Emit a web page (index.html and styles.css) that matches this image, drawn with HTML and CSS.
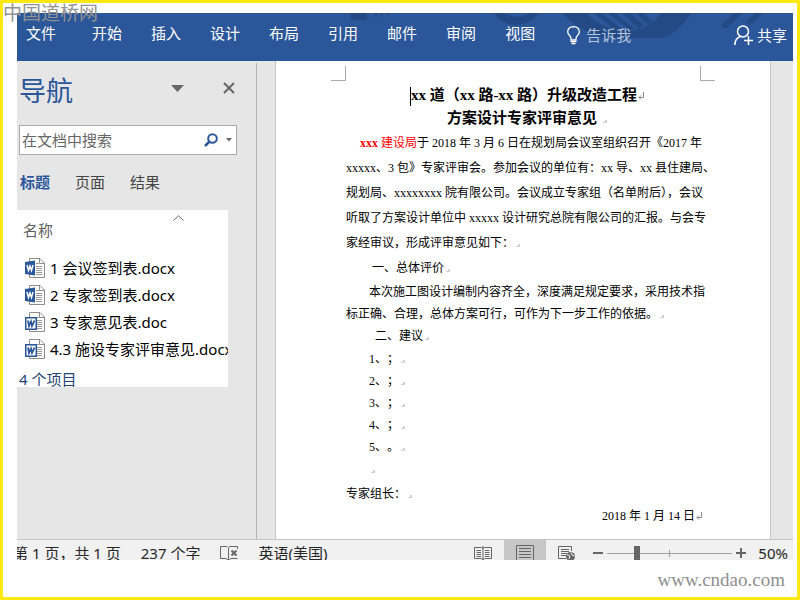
FILE: index.html
```html
<!DOCTYPE html>
<html lang="zh-CN">
<head>
  <meta charset="UTF-8">
  <meta name="viewport" content="width=device-width, initial-scale=1.0">
  <link rel="stylesheet" href="styles.css">
  <title>专家评审意见</title>
</head>
<body>
  <!-- shared icons -->
  <svg class="defs" width="0" height="0" aria-hidden="true">
    <symbol id="sheet" viewBox="0 0 20 20">
      <path d="M4.500 .5H15L19.500 5V19.500H4.500Z" fill="#fff" stroke="#8c8c8c"/>
      <path d="M14.500 .5V5.500H19.500" fill="none" stroke="#8c8c8c"/>
      <path d="M11 5.500h3M11 8.500h6M11 10.500h6M11 12.500h6M11 14.500h6M11 16.500h6" stroke="#9a9a9a"/>
    </symbol>
    <symbol id="docx" viewBox="0 0 20 20">
      <use href="#sheet"/>
      <path d="M0 4L10 2.500V17.500L0 16Z" fill="#2b579a"/>
      <path d="M2 7L3.500 12.500L5 8L6.500 12.500L8 7" fill="none" stroke="#fff" stroke-width="1.500"/>
    </symbol>
    <symbol id="doc" viewBox="0 0 20 20">
      <use href="#sheet"/>
      <path d="M.75 5.750H11.250V17.250H.75Z" fill="#fff" stroke="#2b579a" stroke-width="1.500"/>
      <path d="M3 8.500L4 14L6 9.500L7 14L9.500 8.500" fill="none" stroke="#2b579a" stroke-width="1.800"/>
    </symbol>
    <symbol id="enter" viewBox="0 0 6 8">
      <path d="M5.500 0V5.500H1M3 3.500L1 5.500L3 7.500" fill="none" stroke="#8a8a8a"/>
    </symbol>
  </svg>

  <div class="frame">
    <div class="site-name">中国道桥网</div>

    <div class="word">
      <header class="ribbon">
        <svg class="pattern" width="450" height="26" viewBox="0 0 450 26" aria-hidden="true">
          <g fill="#234a85">
            <path d="M7 0H24V5Q23 7 20 7H11Q7 7 7 3ZM32 0H34V5H32ZM38 0H40V3H38ZM44 0H46V2H44Z"/>
            <path d="M151 0Q160 12 173 12Q186 12 196 0H187Q174 8 161 0Z"/>
            <path d="M219 0Q225 7 235 13L248 21Q256 25 268 25H318Q329 23 338 13L349 0H318Q311 10 300 15Q284 20 266 15Q250 9 244 0Z"/>
            <path d="M251 0H258L280 17H272ZM265 0H272L292 16H285ZM279 0H286L301 12L296 16ZM293 0H300L310 8L305 12Z"/>
            <path d="M391 0H400L383 16L378 12ZM413 0H420L407 12L402 9Z"/>
          </g>
        </svg>
        <nav class="tabs">
          <a class="file" href="#">文件</a>
          <a href="#">开始</a>
          <a href="#">插入</a>
          <a href="#">设计</a>
          <a href="#">布局</a>
          <a href="#">引用</a>
          <a href="#">邮件</a>
          <a href="#">审阅</a>
          <a href="#">视图</a>
        </nav>
        <button class="tell">
          <svg width="13" height="19" viewBox="0 0 13 19" fill="none" stroke="#fff">
            <path d="M4 14V12.500Q4 11 2.500 9.500Q.7 8 .7 5.700Q1 .8 6.500 .7Q12 .8 12.300 5.700Q12.300 8 10.500 9.500Q9 11 9 12.500V14Z" stroke-width="1.300"/>
            <path d="M3.500 15.500H9.500M4.500 17.500H8.500" stroke-width="1.500"/>
          </svg>
          <span>告诉我</span>
        </button>
        <button class="share">
          <svg width="19" height="20" viewBox="0 0 19 20" fill="none" stroke="#fff" stroke-width="1.500">
            <circle cx="9" cy="6.500" r="5.500"/>
            <path d="M.8 20Q1.200 13 6.500 11.500M14.500 11V20M10 15.500H19"/>
          </svg>
          <span>共享</span>
        </button>
      </header>

      <main class="work">
        <aside class="pane">
          <div class="pane-head">
            <h2>导航</h2>
            <button aria-label="任务窗格选项">
              <svg width="13" height="7" viewBox="0 0 13 7"><path d="M0 0H13L6.500 7Z" fill="#666"/></svg>
            </button>
            <button aria-label="关闭">
              <svg width="12" height="12" viewBox="0 0 12 12"><path d="M1 1L11 11M11 1L1 11" stroke="#666" stroke-width="2"/></svg>
            </button>
          </div>

          <div class="search">
            <input type="text" aria-label="在文档中搜索" placeholder="在文档中搜索">
            <button aria-label="搜索">
              <svg width="14" height="14" viewBox="0 0 14 14" fill="none" stroke="#2b579a">
                <circle cx="8.500" cy="5.500" r="4.300" stroke-width="2"/>
                <path d="M5.500 8.500L1 13" stroke-width="2.500"/>
              </svg>
            </button>
            <button aria-label="搜索选项">
              <svg width="6" height="4" viewBox="0 0 6 4"><path d="M0 0H6L3 3.500Z" fill="#666"/></svg>
            </button>
          </div>

          <div class="views">
            <button class="active">标题</button>
            <button>页面</button>
            <button>结果</button>
          </div>

          <div class="files">
            <div class="files-head">
              <span>名称</span>
              <svg width="11" height="6" viewBox="0 0 11 6"><path d="M.5 5.500L5.500 .8L10.500 5.500" fill="none" stroke="#666"/></svg>
            </div>
            <ul>
              <li><a href="#"><svg width="20" height="20"><use href="#docx"/></svg>1 会议签到表.docx</a></li>
              <li><a href="#"><svg width="20" height="20"><use href="#docx"/></svg>2 专家签到表.docx</a></li>
              <li><a href="#"><svg width="20" height="20"><use href="#doc"/></svg>3 专家意见表.doc</a></li>
              <li><a href="#"><svg width="20" height="20"><use href="#doc"/></svg>4.3 施设专家评审意见.docx</a></li>
            </ul>
            <div class="count">4 个项目</div>
          </div>
        </aside>

        <article class="paper">
          <div class="corners"><i class="left"></i><i class="right"></i></div>
          <h1><span class="caret"></span>xx 道（xx 路-xx 路）升级改造工程<svg class="enter" width="6" height="8"><use href="#enter"/></svg><br>方案设计专家评审意见 <i class="end"></i></h1>
          <p class="intro"><span class="red"><b>xxx</b> 建设局</span>于 2018 年 3 月 6 日在规划局会议室组织召开《2017 年<br>xxxxx、3 包》专家评审会。参加会议的单位有：xx 导、xx 县住建局、<br>规划局、xxxxxxxx 院有限公司。会议成立专家组（名单附后），会议<br>听取了方案设计单位中 xxxxx 设计研究总院有限公司的汇报。与会专<br>家经审议，形成评审意见如下：<i class="end"></i></p>
          <h3 class="first">一、总体评价<i class="end"></i></h3>
          <p>本次施工图设计编制内容齐全，深度满足规定要求，采用技术指<br>标正确、合理，总体方案可行，可作为下一步工作的依据。<i class="end"></i></p>
          <h3>二、建议<i class="end"></i></h3>
          <ol>
            <li>1、；<i class="end"></i></li>
            <li>2、；<i class="end"></i></li>
            <li>3、；<i class="end"></i></li>
            <li>4、；<i class="end"></i></li>
            <li>5、。<i class="end"></i></li>
            <li><i class="end"></i></li>
          </ol>
          <div class="leader">专家组长：<i class="end"></i></div>
          <div class="date">2018 年 1 月 14 日<svg class="enter" width="6" height="8"><use href="#enter"/></svg></div>
        </article>
      </main>

      <footer class="status">
        <div class="status-row">
          <span class="pages">第 1 页，共 1 页</span>
          <span>237 个字</span>
          <svg width="18" height="16" viewBox="0 0 18 16" fill="none" stroke="#666">
            <path d="M7.500 1.500H.5V13.500H6L8.500 15.500L11 13.500H17.500M8.500 15V2.500L10 1.500H17.500V4"/>
            <path d="M11.500 5.500L16.500 10.500M16.500 5.500L11.500 10.500" stroke-width="2"/>
          </svg>
          <span>英语(美国)</span>
          <div class="modes">
            <button aria-label="阅读视图">
              <svg width="18" height="15" viewBox="0 0 18 15" fill="none" stroke="#666">
                <path d="M.5 1.500H7.500L9 2.500L10.500 1.500H17.500V12.500H10.500L9 14L7.500 12.500H.5ZM9 0V15"/>
                <path d="M2.500 4.500H7M2.500 6.500H7M2.500 8.500H7M2.500 10.500H7M11 4.500H15.500M11 6.500H15.500M11 8.500H15.500M11 10.500H15.500"/>
              </svg>
            </button>
            <button class="on" aria-label="页面视图">
              <svg width="18" height="16" viewBox="0 0 18 16" fill="none" stroke="#666">
                <path d="M.5 .5H17.500V15.500H.5ZM3 3.500H15M3 6.500H15M3 9.500H15M3 12.500H15"/>
              </svg>
            </button>
            <button aria-label="Web 版式视图">
              <svg width="18" height="15" viewBox="0 0 18 15" fill="none" stroke="#666">
                <path d="M8 12.500H.5V.5H13.500V5M3 3.500H11M3 5.500H11M3 7.500H9M3 9.500H8"/>
                <circle cx="12.500" cy="10.500" r="4.500" fill="#666" stroke="none"/>
                <path d="M9 8.500L12 10L11 13M13 6.500L14 9L16.500 10" stroke="#f1f1f1"/>
              </svg>
            </button>
          </div>
          <div class="zoom">
            <button aria-label="缩小"><svg width="10" height="10" viewBox="0 0 10 10"><path d="M0 5H10" stroke="#666" stroke-width="2"/></svg></button>
            <input type="range" min="10" max="190" value="50" aria-label="缩放">
            <button aria-label="放大"><svg width="10" height="10" viewBox="0 0 10 10"><path d="M0 5H10M5 0V10" stroke="#666" stroke-width="2"/></svg></button>
          </div>
          <span class="percent">50%</span>
        </div>
      </footer>
    </div>

    <div class="site-url">www.cndao.com</div>
  </div>
</body>
</html>
```
FILE: styles.css
```css
* {
  box-sizing: border-box;
}
body {
  margin: 0;
  background-color: #fff;
  font-family: "Noto Sans", "Noto Sans CJK SC", sans-serif;
  font-size: 15px;
  line-height: 22px;
  color: #262626;
}
h1, h2, h3, p, ul, ol {
  margin: 0;
  padding: 0;
  font-weight: normal;
}
ul, ol {
  list-style: none;
}
a {
  color: inherit;
  text-decoration: none;
}
button {
  display: flex;
  align-items: center;
  justify-content: center;
  padding: 0;
  border: none;
  background: none;
  font: inherit;
  color: inherit;
}
svg {
  flex: none;
}
.defs {
  position: absolute;
}

.frame {
  position: relative;
  display: flex;
  flex-direction: column;
  min-height: 100vh;
  padding: 10px 4px 0 14px;
  border: 3px solid #ffe810;
}
.site-name {
  position: absolute;
  z-index: 2;
  top: -1px;
  left: 0;
  font-size: 19px;
  color: #929292;
}
.site-url {
  padding: 9px 8px 6px 0;
  text-align: right;
  font-family: "Liberation Serif", serif;
  font-size: 19px;
  color: #8f8f8f;
}
.word {
  flex: 1;
  display: flex;
  flex-direction: column;
  background-color: #e6e6e6;
}

/* ribbon */
.ribbon {
  position: relative;
  display: flex;
  align-items: center;
  height: 48px;
  padding: 0 6px 8px 9px;
  background-color: #2b579a;
  color: #fff;
  white-space: nowrap;
}
.pattern {
  position: absolute;
  top: 0;
  right: 0;
}
.tabs {
  position: relative;
  display: flex;
  gap: 29px;
}
.tabs .file {
  margin-right: 7px;
}
.tell, .share {
  position: relative;
  gap: 6px;
  padding-top: 4px;
}
.tell {
  margin-left: 32px;
}
.tell span {
  color: #b4c4dd;
}
.share {
  gap: 4px;
  margin-left: auto;
}

/* navigation pane */
.work {
  flex: 1;
  display: flex;
  justify-content: space-between;
}
.pane {
  width: 240px;
  margin-top: 2px;
  border-right: 1px solid #b5b5b5;
}
.pane-head {
  display: flex;
  align-items: center;
  gap: 39px;
  height: 50px;
  padding: 0 21px 0 2px;
}
.pane-head h2 {
  margin-right: auto;
  padding-top: 5px;
  font-size: 27px;
  color: #2b579a;
}
.search {
  display: flex;
  align-items: center;
  gap: 8px;
  height: 30px;
  margin: 12px 19px 0 2px;
  padding: 0 4px 0 2px;
  border: 1px solid #ababab;
  background-color: #fff;
}
.search input {
  flex: 1;
  min-width: 0;
  padding: 0;
  border: none;
  outline: none;
  background: none;
  font: inherit;
}
.search input::placeholder {
  color: #666;
}
.views {
  display: flex;
  gap: 25px;
  padding: 16px 0 17px 3px;
  color: #444;
}
.views .active {
  font-weight: bold;
  color: #2b579a;
}
.files {
  width: 211px;
  overflow: hidden;
  background-color: #fff;
  color: #000;
}
.files-head {
  display: flex;
  justify-content: space-between;
  height: 44px;
  padding: 5px 44px 0 6px;
  color: #5e5e5e;
}
.files-head span {
  padding-top: 4px;
}
.files a {
  display: flex;
  align-items: center;
  gap: 5px;
  height: 27px;
  padding-left: 8px;
  white-space: nowrap;
}
.count {
  height: 25px;
  padding: 6px 0 0 2px;
  color: #1e4578;
}

/* document page */
.paper {
  width: 496px;
  margin-right: 22px;
  padding: 5px 55px 0;
  border: 1px solid #c6c6c6;
  border-width: 0 1px;
  background-color: #fff;
  font-family: "Liberation Serif", "Noto Sans CJK SC", serif;
  font-size: 12px;
  color: #000;
  white-space: nowrap;
}
.corners {
  display: flex;
  justify-content: space-between;
}
.corners i {
  width: 15px;
  height: 15px;
  border-bottom: 1px solid #ababab;
}
.corners .left {
  border-right: 1px solid #ababab;
}
.corners .right {
  border-left: 1px solid #ababab;
}
.paper h1 {
  padding: 3px 0 1px 8px;
  font-size: 15px;
  font-weight: bold;
  line-height: 23px;
  text-align: center;
}
.caret {
  display: inline-block;
  height: 19px;
  border-left: 1px solid #000;
  vertical-align: middle;
}
.enter {
  margin-left: 1px;
}
.end {
  display: inline-block;
  width: 4px;
  height: 3px;
  margin-left: 2px;
  border: solid #d0d0d0;
  border-width: 0 2px 1px 0;
}
.paper p, .paper ol, .paper h3, .leader {
  margin-left: 15px;
}
.paper p {
  text-indent: 23px;
}
.paper .intro {
  line-height: 25px;
  text-indent: 14px;
}
.intro .red {
  color: #f00;
}
.paper h3 {
  padding-left: 29px;
  font-size: 12px;
}
.paper .first {
  padding-left: 26px;
  line-height: 25px;
}
.paper ol {
  padding: 1px 0 3px 23px;
  text-spacing-trim: space-all;
}
.paper li {
  height: 22px;
}
.date {
  padding-right: 13px;
  text-align: right;
}

/* status bar */
.status {
  height: 21px;
  overflow: hidden;
  border-top: 1px solid #c6c6c6;
  background-color: #f1f1f1;
}
.status-row {
  display: flex;
  align-items: center;
  gap: 20px;
  height: 26px;
  white-space: nowrap;
}
.pages {
  margin-left: -4px;
}
.modes {
  display: flex;
  align-self: stretch;
  margin-left: auto;
}
.modes button {
  width: 42px;
}
.modes .on {
  background-color: #c6c6c6;
}
.zoom {
  display: flex;
  align-items: center;
  gap: 4px;
  margin-left: -15px;
}
.zoom input {
  -webkit-appearance: none;
  appearance: none;
  width: 125px;
  height: 14px;
  margin: 0;
  background: linear-gradient(#a0a0a0, #a0a0a0) center / 100% 1px no-repeat,
              linear-gradient(#a0a0a0, #a0a0a0) center / 1px 7px no-repeat;
}
.zoom input::-webkit-slider-thumb {
  -webkit-appearance: none;
  width: 6px;
  height: 14px;
  background-color: #666;
}
.percent {
  margin: 0 5px 0 -8px;
}
```
